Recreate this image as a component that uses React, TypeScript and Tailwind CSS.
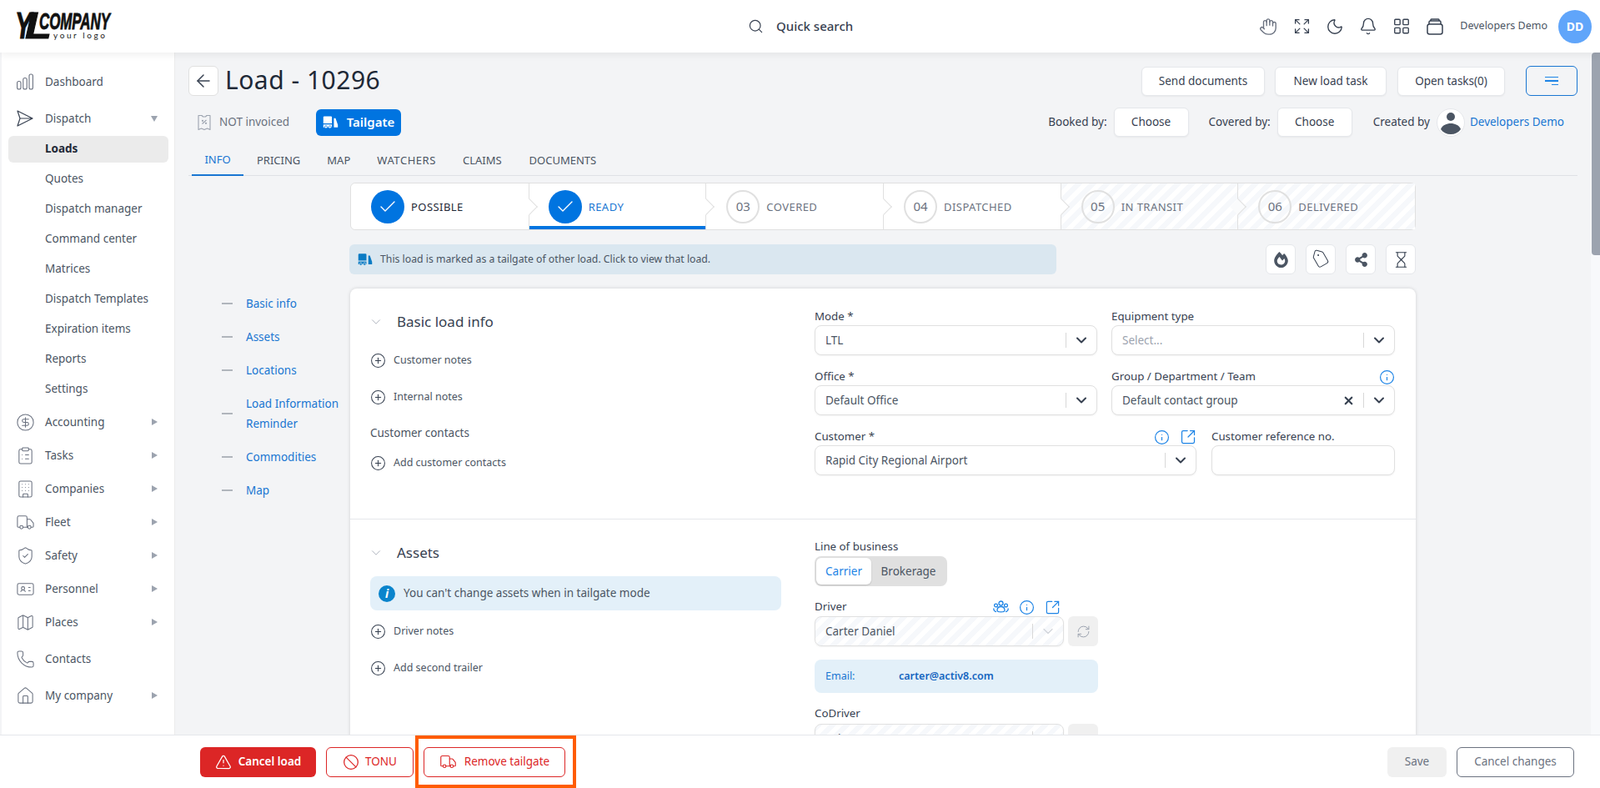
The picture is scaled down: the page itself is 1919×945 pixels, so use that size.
import React from "react";
import {
  ArrowLeft, Ban, Bell, Building, ChevronDown, CircleDollarSign, CirclePlus, ClipboardList, Expand, Hand, Hourglass,
  House, IdCard, Info, LayoutGrid, Map as MapIcon, Moon, Phone, RefreshCw, Search, ShieldCheck, SquareArrowOutUpRight,
  Tag, TriangleAlert, Truck, X, Check,
} from "lucide-react";
import { FaFireAlt, FaShareAlt } from "react-icons/fa";

function Logo() {
  return (
    <svg width="118" height="36" viewBox="0 0 118 36" className="shrink-0 overflow-visible">
      <text x="0" y="32" fontFamily="Liberation Sans" fontWeight="700" fontStyle="italic" fontSize="44" textLength="20" lengthAdjust="spacingAndGlyphs" fill="#111" stroke="#111" strokeWidth="1">Y</text>
      <text x="12" y="32" fontFamily="Liberation Sans" fontWeight="700" fontStyle="italic" fontSize="44" textLength="32" lengthAdjust="spacingAndGlyphs" fill="#111" stroke="#111" strokeWidth="1">L</text>
      <text x="29" y="21" fontFamily="Liberation Sans" fontWeight="700" fontStyle="italic" fontSize="28" textLength="85" lengthAdjust="spacingAndGlyphs" fill="#111" stroke="#111" strokeWidth="0.9">COMPANY</text>
      <text x="46" y="32" fontFamily="Lato" fontSize="10" textLength="62" fill="#222">your logo</text>
    </svg>
  );
}

function BoxIcon() {
  return (
    <svg width="22" height="22" viewBox="0 0 22 22" fill="none" stroke="#374151" strokeWidth="1.5" strokeLinejoin="round">
      <rect x="2" y="8" width="18" height="12" rx="2.5" />
      <path d="M4 8V5.5A1.5 1.5 0 0 1 5.5 4h11A1.5 1.5 0 0 1 18 5.5V8" />
      <path d="M6 4V2.8A.8.8 0 0 1 6.8 2h8.4a.8.8 0 0 1 .8.8V4" />
    </svg>
  );
}

function Bars() {
  return (
    <svg width="20" height="20" viewBox="0 0 20 20" fill="none" stroke="#6b7280" strokeWidth="1.1">
      <rect x="0.6" y="9.5" width="4.4" height="9.5" rx="2" />
      <rect x="7.8" y="5.5" width="4.4" height="13.5" rx="2" />
      <rect x="15" y="1" width="4.4" height="18" rx="2" />
    </svg>
  );
}

function Plane() {
  return (
    <svg width="20" height="20" viewBox="0 0 20 20" fill="none" stroke="#374151" strokeWidth="1.2" strokeLinejoin="round">
      <path d="M1 1l18 9-18 9 3-9zM4 10h15" />
    </svg>
  );
}

function Tailgate({ w = 20, color = "white", hole = "#0074e0" }: { w?: number; color?: string; hole?: string }) {
  return (
    <svg width={w} height={w} viewBox="0 0 24 24">
      <path d="M2.5 3h10A1.5 1.5 0 0 1 14 4.5V14H1V4.5A1.5 1.5 0 0 1 2.500 3z" fill={color} />
      <path d="M1 15.500h13V20H1z" fill={color} />
      <path d="M17 6h2.500L23 16v4h-6z" fill={color} />
      <circle cx="5" cy="19.500" r="2" fill={color} stroke={hole} strokeWidth="1" />
      <circle cx="11" cy="19.500" r="2" fill={color} stroke={hole} strokeWidth="1" />
    </svg>
  );
}

function Receipt() {
  return (
    <svg width="16" height="20" viewBox="0 0 16 20" fill="none" stroke="#9ca3af" strokeWidth="1.1" strokeLinejoin="round">
      <path d="M1 1.500h4l1.500 1.500h3L11 1.500h4v17l-3.500-1.500L8 18.500 4.500 17 1 18.500z" />
      <path d="M5.500 11.500l5-4.500" />
      <circle cx="6" cy="7.800" r=".6" />
      <circle cx="10" cy="10.800" r=".6" />
    </svg>
  );
}

function Group() {
  return (
    <svg width="19" height="17" viewBox="0 0 19 17" fill="none" stroke="#1d84e6" strokeWidth="1.3">
      <circle cx="9.500" cy="3.500" r="2.500" />
      <circle cx="3.500" cy="6" r="1.900" />
      <circle cx="15.500" cy="6" r="1.900" />
      <path d="M5 12c0-3 2-4.500 4.500-4.500S14 9 14 12c0 2.500-9 2.500-9 0z" />
      <path d="M1 9.500C.5 12 2 13.500 4 13.700M18 9.500c.5 2.500-1 4-3 4.200" />
    </svg>
  );
}

type NavProps = { label: string; icon?: React.ReactNode; arrow?: "right" | "down"; h: string; active?: boolean };

function NavItem({ label, icon, arrow, h, active }: NavProps) {
  return (
    <div className={`flex items-center ${h} relative pl-[18px] pr-[20px]`}>
      {active && <div className="absolute left-[8px] right-[7px] top-[3px] h-[32px] rounded-md bg-[#ebebeb]" />}
      <div className="w-[34px] flex items-center relative shrink-0">{icon}</div>
      <span className={`relative text-[13.5px] flex-1 ${active ? "font-bold text-[#1f2937]" : "text-[#4b5563]"}`}>{label}</span>
      {arrow === "right" && <span className="w-0 h-0 border-y-[4.5px] border-y-transparent border-l-[7px] border-l-[#9ca3af]" />}
      {arrow === "down" && <span className="w-0 h-0 border-x-[4.5px] border-x-transparent border-t-[7px] border-t-[#9ca3af]" />}
    </div>
  );
}

const gi = { size: 23, strokeWidth: 1.1, color: "#6b7280", className: "-ml-[1.5px]" };

function Sidebar() {
  return (
    <aside className="w-[210px] shrink-0 bg-white border-l-2 border-[#f3f4f6] border-r border-r-[#ececec] pt-[13px] overflow-hidden">
      <div className="mb-[4px]"><NavItem label="Dashboard" h="h-[44px]" icon={<Bars />} /></div>
      <NavItem label="Dispatch" h="h-[36px]" icon={<Plane />} arrow="down" />
      <NavItem label="Loads" h="h-[36px]" active />
      {["Quotes", "Dispatch manager", "Command center", "Matrices", "Dispatch Templates", "Expiration items", "Reports", "Settings"].map((s) => (
        <NavItem key={s} label={s} h="h-[36px]" />
      ))}
      <div className="h-[2px]" />
      <NavItem label="Accounting" h="h-[40px]" icon={<CircleDollarSign {...gi} />} arrow="right" />
      <NavItem label="Tasks" h="h-[40px]" icon={<ClipboardList {...gi} />} arrow="right" />
      <NavItem label="Companies" h="h-[40px]" icon={<Building {...gi} />} arrow="right" />
      <NavItem label="Fleet" h="h-[40px]" icon={<Truck {...gi} />} arrow="right" />
      <NavItem label="Safety" h="h-[40px]" icon={<ShieldCheck {...gi} />} arrow="right" />
      <NavItem label="Personnel" h="h-[40px]" icon={<IdCard {...gi} />} arrow="right" />
      <NavItem label="Places" h="h-[40px]" icon={<MapIcon {...gi} />} arrow="right" />
      <NavItem label="Contacts" h="h-[48px]" icon={<Phone {...gi} />} />
      <NavItem label="My company" h="h-[40px]" icon={<House {...gi} />} arrow="right" />
    </aside>
  );
}

function HeadIcon({ children }: { children: React.ReactNode }) {
  return <div className="w-[22px] flex items-center justify-center">{children}</div>;
}

function Header() {
  const p = { strokeWidth: 1.5, color: "#374151" };
  return (
    <header className="h-[63px] shrink-0 bg-white shadow-[0_2px_10px_rgba(0,0,0,0.07)] relative z-10 flex items-center pl-[18px] pr-[10px]">
      <Logo />
      <div className="flex-1 flex items-center pl-[761px] gap-[15px]">
        <Search size={19} strokeWidth={1.5} color="#374151" />
        <span className="text-[15px] font-medium text-[#374151]">Quick search</span>
      </div>
      <div className="flex items-center gap-[18px] mr-[19px]">
        <HeadIcon><Hand {...p} size={24} color="#6b7280" /></HeadIcon>
        <HeadIcon><Expand {...p} size={21} /></HeadIcon>
        <HeadIcon><Moon {...p} size={24} /></HeadIcon>
        <HeadIcon><Bell {...p} size={23} /></HeadIcon>
        <HeadIcon><LayoutGrid {...p} size={23} /></HeadIcon>
        <HeadIcon><BoxIcon /></HeadIcon>
      </div>
      <span className="text-[12.5px] text-[#4b5563] mr-[13px]">Developers Demo</span>
      <div className="w-[40px] h-[40px] rounded-full bg-[#60a5fa] text-white text-[14px] font-bold flex items-center justify-center">DD</div>
    </header>
  );
}

function WhiteBtn({ children, w }: { children: React.ReactNode; w: string }) {
  return (
    <button className={`${w} h-[35px] bg-white rounded-md border border-[#e5e7eb] shadow-[0_1px_2px_rgba(0,0,0,0.05)] text-[13.5px] text-[#374151] flex items-center justify-center`}>
      {children}
    </button>
  );
}

const steps = [
  { n: "POSSIBLE", done: true, cls: "bg-white text-[#1f2937]", pl: "pl-[24px]" },
  { n: "READY", done: true, cls: "bg-white text-[#1976d2]", pl: "pl-[23px]", active: true },
  { n: "COVERED", num: "03", cls: "bg-white text-[#6b7280]", pl: "pl-[24px]" },
  { n: "DISPATCHED", num: "04", cls: "bg-white text-[#6b7280]", pl: "pl-[24px]" },
  { n: "IN TRANSIT", num: "05", striped: true, cls: "text-[#6b7280]", pl: "pl-[24px]" },
  { n: "DELIVERED", num: "06", striped: true, cls: "text-[#6b7280]", pl: "pl-[24px]" },
];

function Stepper() {
  return (
    <div className="ml-[194px] w-[1278px] h-[57px] mt-[8px] grid grid-cols-6 border border-[#e0e0e0] rounded-md bg-white">
      {steps.map((s, i) => (
        <div
          key={s.n}
          className={`relative flex items-center gap-[8px] ${s.pl} ${s.cls} ${s.striped ? "bg-[repeating-linear-gradient(135deg,#f6f8fb_0,#f6f8fb_6px,#ffffff_6px,#ffffff_12px)]" : ""} ${i > 0 ? "border-l border-[#e0e0e0]" : "rounded-l-md"}`}
        >
          {i > 0 && (
            <div className={`absolute -left-[7px] top-1/2 -translate-y-1/2 w-[14px] h-[14px] rotate-45 border-t border-r border-[#e0e0e0] ${i === 5 ? "bg-[#fafbfc]" : "bg-white"}`} />
          )}
          {s.done ? (
            <div className="relative w-[40px] h-[40px] rounded-full bg-[#0074e0] flex items-center justify-center shrink-0">
              <Check size={24} strokeWidth={1.4} color="white" />
            </div>
          ) : (
            <div className="relative w-[40px] h-[40px] rounded-full border-2 border-[#e0e0e0] text-[#6b7280] text-[15px] flex items-center justify-center shrink-0">{s.num}</div>
          )}
          <span className="relative top-[1px] text-[13px] tracking-[0.45px]">{s.n}</span>
          {s.active && <div className="absolute left-0 right-0 bottom-0 h-[4px] bg-[#0074e0]" />}
        </div>
      ))}
    </div>
  );
}

function IconBtn({ children }: { children: React.ReactNode }) {
  return <button className="w-[36px] h-[36px] bg-white rounded-md border border-[#e5e7eb] flex items-center justify-center">{children}</button>;
}

function Select({ text, w, placeholder, clear, striped, extraDim }: { text: string; w: string; placeholder?: boolean; clear?: boolean; striped?: boolean; extraDim?: boolean }) {
  return (
    <div className={`${w} h-[36px] rounded-lg border border-[#e0e0e0] shadow-[0_1px_2px_rgba(0,0,0,0.05)] flex items-center ${striped ? "bg-[repeating-linear-gradient(135deg,#f6f8fb_0,#f6f8fb_6px,#ffffff_6px,#ffffff_12px)]" : "bg-white"}`}>
      <span className={`flex-1 pl-[12px] text-[13.5px] ${placeholder ? "text-[#9ca3af]" : "text-[#4b5563]"}`}>{text}</span>
      {clear && <X size={15} strokeWidth={3.5} color="#374151" className="mr-[10px]" />}
      <div className="w-px h-[18px] bg-[#d8d8d8]" />
      <div className="w-[36px] flex justify-center">
        <ChevronDown size={20} strokeWidth={extraDim ? 1.5 : 2.4} color={extraDim ? "#d1d5db" : "#374151"} />
      </div>
    </div>
  );
}

function Label({ children, right }: { children: React.ReactNode; right?: React.ReactNode }) {
  return (
    <div className="h-[20px] flex items-center justify-between text-[13.3px] text-[#374151]">
      <span>{children}</span>
      {right}
    </div>
  );
}

const blue = { color: "#1d84e6", strokeWidth: 1.5 };

function AddRow({ text, mt }: { text: string; mt: string }) {
  return (
    <div className={`h-[20px] flex items-center gap-[9px] ${mt} text-[12.5px] text-[#4b5563]`}>
      <CirclePlus size={19} strokeWidth={1.3} color="#374151" />
      <span>{text}</span>
    </div>
  );
}

function SectionHead({ title }: { title: string }) {
  return (
    <div className="h-[24px] flex items-center gap-[16px]">
      <ChevronDown size={18} strokeWidth={1.1} color="#9ca3af" className="shrink-0 -ml-[2px]" />
      <span className="text-[17px] text-[#374151]">{title}</span>
    </div>
  );
}

function Card() {
  return (
    <div className="w-[1278px] bg-white rounded-t-lg shadow-[0_0_4px_rgba(0,0,0,0.15)] shrink-0">
      <div className="h-[277px] border-b border-[#e5e7eb] flex">
        <div className="w-[557px] shrink-0 pl-[24px] pt-[28px]">
          <SectionHead title="Basic load info" />
          <AddRow text="Customer notes" mt="mt-[24px]" />
          <AddRow text="Internal notes" mt="mt-[24px]" />
          <div className="h-[20px] mt-[23px] flex items-center text-[13.5px] text-[#4b5563]">Customer contacts</div>
          <AddRow text="Add customer contacts" mt="mt-[16px]" />
        </div>
        <div className="pt-[24px] flex flex-col gap-[16px]">
          <div className="flex gap-[17px]">
            <div className="w-[339px]"><Label>Mode *</Label><Select text="LTL" w="w-full" /></div>
            <div className="w-[340px]"><Label>Equipment type</Label><Select text="Select..." placeholder w="w-full" /></div>
          </div>
          <div className="flex gap-[17px]">
            <div className="w-[339px]"><Label>Office *</Label><Select text="Default Office" w="w-full" /></div>
            <div className="w-[340px]">
              <Label right={<Info size={19} {...blue} />}>Group / Department / Team</Label>
              <Select text="Default contact group" clear w="w-full" />
            </div>
          </div>
          <div className="flex gap-[18px]">
            <div className="w-[458px]">
              <Label right={<span className="flex items-center gap-[12px]"><Info size={19} {...blue} /><SquareArrowOutUpRight size={20} {...blue} /></span>}>Customer *</Label>
              <Select text="Rapid City Regional Airport" w="w-full" />
            </div>
            <div className="w-[220px]">
              <Label>Customer reference no.</Label>
              <div className="h-[36px] rounded-lg border border-[#e0e0e0] bg-white shadow-[0_1px_2px_rgba(0,0,0,0.05)]" />
            </div>
          </div>
        </div>
      </div>
      <div className="flex h-[400px]">
        <div className="w-[557px] shrink-0 pl-[24px] pt-[28px]">
          <SectionHead title="Assets" />
          <div className="w-[493px] h-[41px] mt-[16px] rounded-lg bg-[#e3f0f9] flex items-center gap-[10px] pl-[10px] text-[13.5px] text-[#4b5563]">
            <span className="w-[20px] h-[20px] rounded-full bg-[#0a84cc] text-white text-[14px] font-bold flex items-center justify-center font-['Liberation_Serif',serif] italic">i</span>
            You can't change assets when in tailgate mode
          </div>
          <AddRow text="Driver notes" mt="mt-[15px]" />
          <AddRow text="Add second trailer" mt="mt-[24px]" />
        </div>
        <div className="pt-[23px] w-[340px]">
          <Label>Line of business</Label>
          <div className="w-[159px] h-[36px] mt-[1px] rounded-lg bg-[#e0e0e0] p-[2px] flex items-center text-[13.5px]">
            <div className="w-[66px] h-[32px] bg-white rounded-md shadow-[0_1px_2px_rgba(0,0,0,0.15)] text-[#1d84e6] flex items-center justify-center">Carrier</div>
            <div className="flex-1 text-center text-[#4b5563]">Brokerage</div>
          </div>
          <div className="mt-[15px]">
            <Label right={<span className="flex items-center gap-[12px] mr-[45px]"><Group /><Info size={19} {...blue} /><SquareArrowOutUpRight size={19} {...blue} /></span>}>Driver</Label>
          </div>
          <div className="flex items-center gap-[5px] mt-[1px]">
            <Select text="Carter Daniel" striped extraDim w="w-[299px]" />
            <div className="w-[36px] h-[36px] rounded-md bg-[#f0f0f0] flex items-center justify-center">
              <RefreshCw size={17} strokeWidth={1.4} color="#9ca3af" />
            </div>
          </div>
          <div className="h-[40px] mt-[16px] rounded-lg bg-[#e3f0f9] flex items-center pl-[13px] text-[12.5px]">
            <span className="w-[88px] text-[#1976d2]">Email:</span>
            <span className="text-[#1565c0] font-semibold">carter@activ8.com</span>
          </div>
          <div className="mt-[15px]"><Label>CoDriver</Label></div>
          <div className="flex items-center gap-[5px] mt-[2px]">
            <Select text="Select..." striped extraDim w="w-[299px]" />
            <div className="w-[36px] h-[36px] rounded-md bg-[#f0f0f0]" />
          </div>
        </div>
      </div>
    </div>
  );
}

function SideLinks() {
  const links = ["Basic info", "Assets", "Locations", "Load Information Reminder", "Commodities", "Map"];
  return (
    <div className="w-[194px] shrink-0 pt-[6px] pl-[40px] flex flex-col gap-[16px]">
      {links.map((l) => (
        <div key={l} className="flex items-center gap-[16px]">
          <div className="w-[13px] h-[1.5px] bg-[#b0b5bc] shrink-0" />
          <span className="w-[122px] text-[13.5px] leading-[24px] text-[#1976d2]">{l}</span>
        </div>
      ))}
    </div>
  );
}

function Main() {
  return (
    <main className="flex-1 min-w-0 bg-[#f3f4f6] overflow-hidden pl-[16px] pr-[16px] pt-[16px]">
      <div className="flex items-center justify-between h-[36px]">
        <div className="flex items-center gap-[8px]">
          <button className="w-[36px] h-[36px] bg-white border border-[#e0e0e0] rounded-md flex items-center justify-center">
            <ArrowLeft size={24} strokeWidth={1.5} color="#374151" />
          </button>
          <h1 className="text-[30px] text-[#1f2937] tracking-[0.5px] mb-[3px]">Load - 10296</h1>
        </div>
        <div className="flex items-center">
          <WhiteBtn w="w-[148px]">Send documents</WhiteBtn>
          <div className="w-[12px]" />
          <WhiteBtn w="w-[134px]">New load task</WhiteBtn>
          <div className="w-[13px]" />
          <WhiteBtn w="w-[129px]">Open tasks(0)</WhiteBtn>
          <div className="w-[25px]" />
          <button className="w-[62px] h-[36px] border border-[#1976d2] rounded-md flex flex-col items-center justify-center gap-[3px]">
            <span className="block w-[16px] h-[1.5px] bg-[#1d84e6]" />
            <span className="block w-[16px] h-[1.5px] bg-[#1d84e6]" />
            <span className="block w-[8px] h-[1.5px] bg-[#1d84e6] ml-[8px]" />
          </button>
        </div>
      </div>

      <div className="flex items-center justify-between h-[35px] mt-[14px]">
        <div className="flex items-center pl-[11px]">
          <Receipt />
          <span className="ml-[10px] text-[13.5px] text-[#6b7280] w-[116px]">NOT invoiced</span>
          <div className="w-[102px] h-[32px] rounded-md bg-[#0074e0] text-white text-[15px] font-semibold flex items-center justify-center gap-[10px]">
            <Tailgate w={19} />
            Tailgate
          </div>
        </div>
        <div className="flex items-center text-[13.5px] text-[#374151] pr-[16px]">
          <span className="mr-[8px]">Booked by:</span>
          <WhiteBtn w="w-[90px]">Choose</WhiteBtn>
          <span className="ml-[24px] mr-[8px]">Covered by:</span>
          <WhiteBtn w="w-[90px]">Choose</WhiteBtn>
          <span className="ml-[25px] mr-[8px]">Created by</span>
          <div className="w-[34px] h-[34px] rounded-full bg-white flex items-center justify-center overflow-hidden border border-[#e5e7eb]">
            <svg width="26" height="28" viewBox="0 0 26 28" fill="#4b5563">
              <circle cx="13" cy="7" r="5" />
              <path d="M1 22c2-5 7-7 12-7s10 2 12 7c-3 4-7 6-12 6s-9-2-12-6z" />
            </svg>
          </div>
          <span className="ml-[6px] text-[#1976d2]">Developers Demo</span>
        </div>
      </div>

      <div className="h-[36px] mt-[11px] border-b border-[#dfe1e5] flex items-stretch text-[13px] text-[#4b5563] pl-[4px]">
        <div className="w-[62px] flex items-center justify-center text-[#1976d2] border-b-2 border-[#1976d2] -mb-px">INFO</div>
        <div className="ml-[16px] flex items-center">PRICING</div>
        <div className="ml-[32px] flex items-center">MAP</div>
        <div className="ml-[32px] flex items-center tracking-[0.55px]">WATCHERS</div>
        <div className="ml-[32px] flex items-center">CLAIMS</div>
        <div className="ml-[33px] flex items-center">DOCUMENTS</div>
      </div>

      <Stepper />

      <div className="ml-[193px] w-[1279px] mt-[17px] flex justify-between">
        <div className="w-[848px] h-[36px] rounded-md bg-[#dae7f0] flex items-center gap-[9px] pl-[10px] text-[12.25px] text-[#4b5563]">
          <Tailgate w={18} color="#0a7bc4" hole="#dae7f0" />
          This load is marked as a tailgate of other load. Click to view that load.
        </div>
        <div className="flex gap-[12px]">
          <IconBtn><FaFireAlt size={19} color="#4b5563" /></IconBtn>
          <IconBtn><Tag size={22} strokeWidth={1.1} color="#374151" className="rotate-[15deg]" /></IconBtn>
          <IconBtn><FaShareAlt size={17} color="#4b5563" /></IconBtn>
          <IconBtn><Hourglass size={21} strokeWidth={1.3} color="#374151" /></IconBtn>
        </div>
      </div>

      <div className="flex mt-[17px]">
        <SideLinks />
        <Card />
      </div>
    </main>
  );
}

function BottomBar() {
  return (
    <footer className="h-[64px] shrink-0 bg-white border-t border-[#e5e7eb] flex items-center justify-between pl-[240px] pr-[31px] relative z-10">
      <div className="flex items-center gap-[12px] text-[13.5px]">
        <button className="w-[139px] h-[36px] rounded-md bg-[#dc2626] text-white font-semibold flex items-center justify-center gap-[8px]">
          <TriangleAlert size={20} strokeWidth={1.5} color="white" />
          Cancel load
        </button>
        <button className="w-[105px] h-[36px] rounded-md border border-[#dc2626] text-[#dc2626] bg-white flex items-center justify-center gap-[7px]">
          <Ban size={20} strokeWidth={1.5} color="#dc2626" />
          TONU
        </button>
        <button className="w-[170px] h-[36px] rounded-md border border-[#dc2626] text-[#dc2626] bg-white flex items-center justify-center gap-[9px]">
          <Truck size={21} strokeWidth={1.3} color="#dc2626" />
          Remove tailgate
        </button>
      </div>
      <div className="flex items-center gap-[12px] text-[13.5px] text-[#6b7280]">
        <button className="w-[71px] h-[36px] rounded-md bg-[#f0f0f0]">Save</button>
        <button className="w-[141px] h-[36px] rounded-md border border-[#6b7280] bg-white">Cancel changes</button>
      </div>
      <div className="absolute left-[498px] top-0 w-[193px] h-[63px] border-[4px] border-[#ff5c00] pointer-events-none" />
    </footer>
  );
}

export default function App() {
  return (
    <div className="w-[1919px] h-[945px] flex flex-col overflow-hidden font-['Lato','Noto_Sans',sans-serif] bg-white">
      <Header />
      <div className="flex-1 min-h-0 flex">
        <Sidebar />
        <Main />
        <div className="w-[11px] shrink-0 bg-[#f8f9fb]">
          <div className="h-[243px] bg-[#9ca3af] rounded-l-sm ml-[1px]" />
        </div>
      </div>
      <BottomBar />
    </div>
  );
}
